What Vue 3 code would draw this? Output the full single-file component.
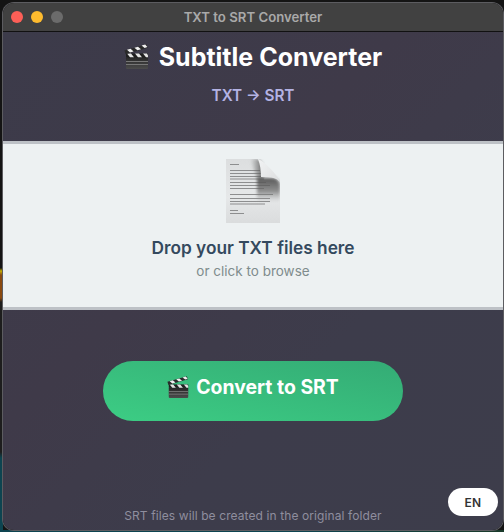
<script setup>
const lines = [
  [4, 5, 9], [4, 11, 30], [4, 14, 32], [4, 17, 32], [4, 19.5, 34], [4, 23, 36], [4, 26, 40], [4, 29, 34],
  [4, 35, 43], [4, 39, 40], [4, 42, 40], [4, 44.5, 35], [4, 51, 8], [4, 54, 14]
]
</script>

<template>
  <div class="desktop">
    <div class="window">
      <div class="titlebar">
        <div class="lights">
          <span class="light red"></span>
          <span class="light yellow"></span>
          <span class="light grey"></span>
        </div>
        <span class="window-title">TXT to SRT Converter</span>
      </div>

      <div class="content">
        <header class="header">
          <h1 class="heading">
            <svg class="clapper clapper-big" viewBox="0 0 26 26">
              <use href="#clap" />
            </svg>
            Subtitle Converter
          </h1>
          <p class="formats">TXT → SRT</p>
        </header>

        <section class="dropzone">
          <svg class="file-icon" width="54" height="64" viewBox="0 0 54 64">
            <defs>
              <filter id="soft"><feGaussianBlur stdDeviation="0.5" /></filter>
              <filter id="lineblur" x="-5%" y="-5%" width="110%" height="110%"><feGaussianBlur stdDeviation="0.7" /></filter>
              <filter id="softer"><feGaussianBlur stdDeviation="1.6" /></filter>
              <linearGradient id="paper" x1="0" y1="0" x2="0" y2="1">
                <stop offset="0" stop-color="#dcdedf" />
                <stop offset="0.6" stop-color="#e6e8e9" />
                <stop offset="1" stop-color="#dadcdd" />
              </linearGradient>
              <linearGradient id="fold" x1="0" y1="0" x2="1" y2="1">
                <stop offset="0" stop-color="#f2f3f4" />
                <stop offset="1" stop-color="#dcdedf" />
              </linearGradient>
              <linearGradient id="shadeTop" x1="0" y1="0" x2="1" y2="0">
                <stop offset="0" stop-color="#777" stop-opacity="0" />
                <stop offset="1" stop-color="#555" stop-opacity="0.9" />
              </linearGradient>
              <linearGradient id="shadeSide" x1="0" y1="0" x2="0" y2="1">
                <stop offset="0" stop-color="#4f4f4f" stop-opacity="0.95" />
                <stop offset="0.55" stop-color="#6a6a6a" stop-opacity="0.7" />
                <stop offset="1" stop-color="#999" stop-opacity="0" />
              </linearGradient>
              <linearGradient id="board" x1="0" y1="0" x2="0" y2="1">
                <stop offset="0" stop-color="#262626" />
                <stop offset="1" stop-color="#4c4c4c" />
              </linearGradient>
              <symbol id="clap" viewBox="0 0 26 26">
                <rect x="2" y="13" width="22" height="12" rx="1.2" fill="url(#board)" />
                <rect x="2" y="17" width="22" height="1" fill="#777" />
                <rect x="2" y="20" width="22" height="1" fill="#777" />
                <rect x="2" y="9.5" width="22" height="3.8" fill="#1f1f1f" />
                <path d="M3 9.5h4l3 3.8H6zM11 9.5h4l3 3.8h-4zM19 9.5h4l1 2v1.8h-2z" fill="#e4e4e4" />
                <path d="M0.5 6.5 22.5 0.2l1.1 3.6L1.6 10.2z" fill="#2a2a2a" />
                <path d="M3 5.8l3.6-1 3 2.6-3.6 1zM10.4 3.7l3.6-1 3 2.6-3.6 1zM17.6 1.6l3.6-1 2.2 2.4-2.8.9z" fill="#efefef" />
              </symbol>
            </defs>
            <path d="M0 0h29c4 0 6 3 8 7l17 17v40H0z" fill="url(#paper)" filter="url(#soft)" />
            <g filter="url(#lineblur)" fill="#8d8e8f">
              <rect v-for="(l, i) in lines" :key="i" :x="l[0]" :y="l[1]" :width="l[2]" height="1" />
            </g>
            <path d="M24 0h7c4 0 6 5 6 12v8H31z" fill="url(#shadeTop)" filter="url(#softer)" />
            <path d="M31 19h15c5 0 8 3 8 9v15H31z" fill="url(#shadeSide)" filter="url(#softer)" />
            <path d="M32 0c6 2 20 16 22 23-3-4-8-5-19-5 0-7-1-13-3-18z" fill="url(#fold)" filter="url(#soft)" />
          </svg>
          <p class="drop-title">Drop your TXT files here</p>
          <p class="drop-sub">or click to browse</p>
        </section>

        <div class="action">
          <button class="convert" type="button">
            <svg class="clapper" viewBox="0 0 26 26">
              <use href="#clap" />
            </svg>
            Convert to SRT
          </button>
        </div>

        <p class="footnote">SRT files will be created in the original folder</p>
        <button class="lang" type="button">EN</button>
      </div>
    </div>
  </div>
</template>

<style scoped>
.desktop {
  width: 504px;
  height: 532px;
  box-sizing: border-box;
  padding: 3px 1px 2px 3px;
  background:
    linear-gradient(to bottom, #141414 0, #141414 268px, #c7b000 271px, #8a4a10 275px, #8a4a10 298px, #1d1d1d 302px, #1d1d1d 452px, #0d4450 458px, #0d4450 100%) left top / 3px 100% no-repeat,
    linear-gradient(to right, #0d4450, #0d4450 60%, #1a3a2a) left bottom / 100% 2px no-repeat,
    #141414;
  font-family: Inter, "Liberation Sans", sans-serif;
}

.window {
  height: 100%;
  display: flex;
  flex-direction: column;
  border-radius: 11px;
  overflow: hidden;
  box-shadow: 0 0 0 1px #5c5c60;
}

.titlebar {
  height: 28px;
  flex: none;
  position: relative;
  display: flex;
  align-items: center;
  justify-content: center;
  background: #414141;
  border-bottom: 1px solid #111;
}

.lights {
  position: absolute;
  left: 8px;
  top: 8px;
  display: flex;
  gap: 8px;
}

.light {
  width: 12px;
  height: 12px;
  border-radius: 50%;
}

.red { background: #fd5f57; }
.yellow { background: #febb2e; }
.grey { background: #6b6b6b; }

.window-title {
  font-size: 13.2px;
  font-weight: 600;
  color: #a9a9a9;
}

.content {
  flex: 1;
  position: relative;
  display: flex;
  flex-direction: column;
  background: linear-gradient(135deg, #3c3b4a 0%, #3f3a49 40%, #3d3c4b 65%, #3d3d4b 100%);
}

.header {
  height: 109px;
  flex: none;
  text-align: center;
}

.heading {
  margin: 0;
  padding-top: 9px;
  font-size: 25px;
  line-height: 32px;
  font-weight: 700;
  color: #fff;
  display: flex;
  align-items: center;
  justify-content: center;
  gap: 9px;
}

.clapper {
  width: 26px;
  height: 26px;
}

.formats {
  margin: 14px 0 0;
  font-size: 15.3px;
  line-height: 18px;
  font-weight: 600;
  color: #b4b3e4;
}

.dropzone {
  height: 169px;
  flex: none;
  box-sizing: border-box;
  display: flex;
  flex-direction: column;
  align-items: center;
  background: #edf1f2;
  border-top: 3px solid #bdc1c6;
  border-bottom: 3px solid #bdc1c6;
  padding-top: 15px;
}

.drop-title {
  margin: 15px 0 0;
  font-size: 17.3px;
  line-height: 20px;
  font-weight: 600;
  color: #34495e;
}

.drop-sub {
  margin: 5px 0 0;
  font-size: 13.5px;
  line-height: 16px;
  color: #7f8c8d;
}

.action {
  display: flex;
  justify-content: center;
  padding-top: 51px;
}

.convert {
  width: 300px;
  height: 60px;
  border: none;
  border-radius: 30px;
  display: flex;
  align-items: center;
  justify-content: center;
  gap: 6px;
  padding: 0 0 8px;
  background: linear-gradient(to top right, #3ccd84, #34ab75);
  color: #fff;
  font-family: inherit;
  font-size: 19.4px;
  font-weight: 700;
}

.convert .clapper {
  width: 23px;
  height: 23px;
}

.footnote {
  margin: auto 0 7px;
  text-align: center;
  font-size: 12px;
  line-height: 15px;
  letter-spacing: 0.1px;
  color: #8f8e9e;
}

.lang {
  position: absolute;
  right: 5px;
  bottom: 14px;
  width: 50px;
  height: 28px;
  border: none;
  border-radius: 14px;
  background: #fff;
  color: #333;
  font-family: inherit;
  font-size: 12px;
  font-weight: 600;
  letter-spacing: 0.4px;
  padding: 0;
}
</style>
